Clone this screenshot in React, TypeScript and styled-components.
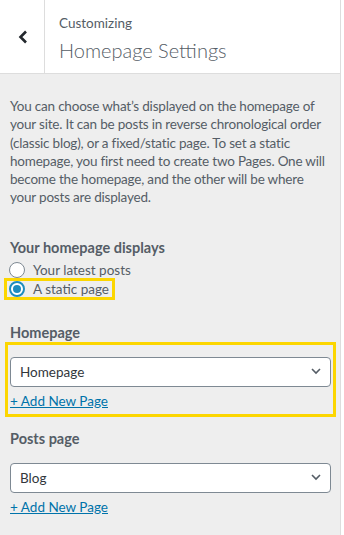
import React, { useState } from "react";
import styled, { createGlobalStyle } from "styled-components";

const GlobalStyle = createGlobalStyle`
  html, body {
    margin: 0;
    padding: 0;
    background: #fff;
  }
  body {
    font-family: Lato, "Noto Sans", Arial, sans-serif;
    color: #555d66;
  }
`;

interface PageSelectProps {
  label: string;
  value: string;
  highlighted?: boolean;
}

const PageSelect: React.FC<PageSelectProps> = ({ label, value, highlighted }) => (
  <StyledControl>
    <StyledLabel>{label}</StyledLabel>
    <StyledHighlight highlighted={highlighted}>
      <StyledSelect>
        <span>{value}</span>
        <svg width="10" height="7" viewBox="0 0 10 7">
          <polyline points="1,1 5,5 9,1" fill="none" stroke="#555d66" strokeWidth="1.6" />
        </svg>
      </StyledSelect>
      <StyledLink href="#">+ Add New Page</StyledLink>
    </StyledHighlight>
  </StyledControl>
);

const App: React.FC = () => {
  const [choice, setChoice] = useState("page");

  return (
    <>
      <GlobalStyle />
      <StyledPanel>
        <StyledHeader>
          <StyledBack aria-label="Back">
            <svg width="10" height="14" viewBox="0 0 10 14">
              <polyline points="8,1.5 2.5,7 8,12.5" fill="none" stroke="#23282d" strokeWidth="2.6" />
            </svg>
          </StyledBack>
          <StyledTitleBox>
            <StyledSubtitle>Customizing</StyledSubtitle>
            <StyledTitle>Homepage Settings</StyledTitle>
          </StyledTitleBox>
        </StyledHeader>
        <StyledBody>
          <StyledDescription>
            You can choose what’s displayed on the homepage of your site. It can be posts in
            reverse chronological order (classic blog), or a fixed/static page. To set a static
            homepage, you first need to create two Pages. One will become the homepage, and the
            other will be where your posts are displayed.
          </StyledDescription>
          <StyledControl>
            <StyledLabel>Your homepage displays</StyledLabel>
            <StyledRadioRow onClick={() => setChoice("posts")}>
              <StyledRadio checked={choice === "posts"} />
              Your latest posts
            </StyledRadioRow>
            <StyledRadioRow highlighted onClick={() => setChoice("page")}>
              <StyledRadio checked={choice === "page"} />
              A static page
            </StyledRadioRow>
          </StyledControl>
          <PageSelect label="Homepage" value="Homepage" highlighted />
          <PageSelect label="Posts page" value="Blog" />
        </StyledBody>
      </StyledPanel>
    </>
  );
};
export default App;

const StyledPanel = styled.div`
  width: 341px;
  height: 535px;
  overflow: hidden;
  background: #eee;
  border-right: 1px solid #ddd;
  box-sizing: border-box;
`;

const StyledHeader = styled.div`
  height: 74px;
  display: flex;
  background: #fff;
  border-bottom: 1px solid #ddd;
  box-sizing: border-box;
`;

const StyledBack = styled.button`
  width: 45px;
  border: none;
  border-right: 1px solid #ddd;
  background: #fff;
  display: flex;
  align-items: center;
  justify-content: center;
  padding: 0 0 0 1px;
  cursor: pointer;
`;

const StyledTitleBox = styled.div`
  display: flex;
  flex-direction: column;
  padding: 13px 0 0 14px;
`;

const StyledSubtitle = styled.span`
  font-size: 13.5px;
  line-height: 20px;
  color: #555d66;
`;

const StyledTitle = styled.span`
  font-size: 20px;
  font-weight: 300;
  line-height: 28px;
  margin-top: 3px;
  color: #555d66;
`;

const StyledBody = styled.div`
  padding: 23px 9px 0 10px;
`;

const StyledDescription = styled.p`
  margin: 0 0 31px;
  font-size: 13.5px;
  letter-spacing: -0.2px;
  line-height: 18.3px;
  color: #555d66;
`;

const StyledControl = styled.div`
  display: flex;
  flex-direction: column;
  align-items: flex-start;
  margin-bottom: 12px;
  &:nth-child(2) {
    margin-bottom: 23px;
  }
`;

const StyledLabel = styled.span`
  font-size: 14.5px;
  font-weight: 700;
  line-height: 20px;
  color: #555d66;
`;

const StyledRadioRow = styled.label<{ highlighted?: boolean }>`
  display: flex;
  align-items: center;
  gap: 8px;
  font-size: 13.5px;
  line-height: 16px;
  color: #555d66;
  cursor: pointer;
  box-sizing: border-box;
  ${(props) =>
    props.highlighted
      ? `
    border: 3px solid #fcd600;
    margin: -1px 0 0 -6px;
    padding: 0 3px 0 2px;
  `
      : `
    height: 18px;
    margin-top: 3px;
    margin-left: -1px;
  `}
`;

const StyledRadio = styled.span<{ checked: boolean }>`
  width: 16px;
  height: 16px;
  border-radius: 50%;
  background: #fff;
  box-sizing: border-box;
  flex-shrink: 0;
  position: relative;
  ${(props) =>
    props.checked
      ? `
    border: 2px solid #1e8cbe;
    &::after {
      content: "";
      position: absolute;
      left: 2px;
      top: 2px;
      width: 8px;
      height: 8px;
      border-radius: 50%;
      background: #1e8cbe;
    }
  `
      : `
    border: 1px solid #7e8993;
  `}
`;

const StyledHighlight = styled.div<{ highlighted?: boolean }>`
  display: flex;
  flex-direction: column;
  align-items: flex-start;
  align-self: stretch;
  margin-top: 14px;
  ${(props) =>
    props.highlighted &&
    `
    border: 3px solid #fcd600;
    margin: -1px -5px 0 -5px;
    padding: 12px 3px 4px 2px;
  `}
`;

const StyledSelect = styled.div`
  width: 321px;
  height: 30px;
  box-sizing: border-box;
  background: #fff;
  border: 1px solid #7e8993;
  border-radius: 4px;
  display: flex;
  align-items: center;
  justify-content: space-between;
  padding: 0 9px;
  font-size: 13.5px;
  color: #32373c;
`;

const StyledLink = styled.a`
  margin-top: 5px;
  font-size: 13.5px;
  line-height: 18px;
  color: #0073aa;
  text-decoration: underline;
`;
